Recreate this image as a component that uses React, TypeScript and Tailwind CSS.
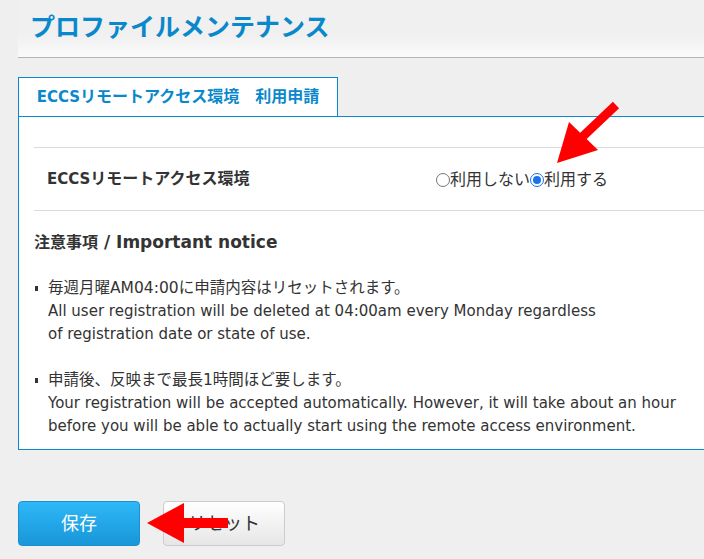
import React from 'react'

const font = "font-['DejaVu_Sans','Noto_Sans_CJK_JP',sans-serif]"

const Radio = ({ checked }: { checked?: boolean }) => (
    <span className={`inline-flex w-[14px] h-[14px] rounded-full border-[1.5px] items-center justify-center bg-white ${checked ? 'border-[#1a73e8]' : 'border-[#767676]'}`}>
        {checked && <span className='w-[8px] h-[8px] rounded-full bg-[#1a73e8]'></span>}
    </span>
)

const Notice = ({ ja, en }: { ja: string; en: string[] }) => (
    <li className='flex'>
        <span className='w-[14px] shrink-0 pt-[9px] pl-px'>
            <span className='block w-[3px] h-[5px] bg-[#333]'></span>
        </span>
        <div>
            <div className='text-[15.5px]'>{ja}</div>
            {en.map((l) => <div key={l}>{l}</div>)}
        </div>
    </li>
)

const App = () => {
    return (
        <div className={`relative w-[704px] h-[559px] overflow-hidden bg-[#efefef] text-[#333] ${font}`}>
            {/* header */}
            <div className='ml-[18px] h-[58px] border-b border-[#b3b3b3] bg-gradient-to-b from-[#f0f0f0] from-60% to-[#fafafa] flex items-center pl-[12px] pb-[6px]'>
                <h1 className="text-[25px] font-bold text-[#0a88cc] font-['Noto_Sans_CJK_JP',sans-serif]">プロファイルメンテナンス</h1>
            </div>

            <div className='ml-[18px] mt-[19px]'>
                <div className='w-[320px] h-[39px] border border-b-0 border-[#0a88cc] bg-white flex items-center justify-center text-[16px] font-bold text-[#0a88cc]'>
                    <span className='text-[15px]'>ECCS</span>リモートアクセス環境　利用申請
                </div>
                <div className='w-[720px] border border-[#0a88cc] bg-white pl-[15px] pt-[30px] pb-[11px]'>
                    <div className='h-[64px] border-y border-[#dadada] flex items-center'>
                        <div className='w-[402px] pl-[13px] text-[16px] font-bold'>
                            <span className='text-[15px]'>ECCS</span>リモートアクセス環境
                        </div>
                        <label className='flex items-center text-[16px] pt-px'>
                            <Radio />利用しない<Radio checked />利用する
                        </label>
                    </div>
                    <div className='mt-[20px] text-[16px] font-bold leading-[22px]'>
                        注意事項<span className='text-[17px]'> / Important notice</span>
                    </div>
                    <ul className='mt-[23px] text-[15px] leading-[23px] space-y-[23px]'>
                        <Notice ja='毎週月曜AM04:00に申請内容はリセットされます。' en={['All user registration will be deleted at 04:00am every Monday regardless', 'of registration date or state of use.']} />
                        <Notice ja='申請後、反映まで最長1時間ほど要します。' en={['Your registration will be accepted automatically. However, it will take about an hour', 'before you will be able to actually start using the remote access environment.']} />
                    </ul>
                </div>
            </div>

            <div className='ml-[18px] mt-[51px] flex gap-[23px]'>
                <button className='w-[122px] h-[45px] rounded-[4px] border border-[#1a90d0] bg-gradient-to-b from-[#2eb8f8] to-[#1896d8] text-white text-[18px]'>保存</button>
                <button className='w-[122px] h-[45px] rounded-[4px] border border-[#cccccc] bg-gradient-to-b from-white to-[#e6e6e6] text-[#333] text-[18px]'>リセット</button>
            </div>

            {/* red annotation arrows */}
            <svg className='absolute left-0 top-0 pointer-events-none' width='704' height='559'>
                <line x1='616' y1='105' x2='578' y2='141' stroke='#ff0000' strokeWidth='9' />
                <polygon points='557,163 569,122 598,150' fill='#ff0000' />
                <rect x='180' y='518' width='48' height='10' fill='#ff0000' />
                <polygon points='147,523 184,503 184,543' fill='#ff0000' />
            </svg>
        </div>
    )
}

export default App
